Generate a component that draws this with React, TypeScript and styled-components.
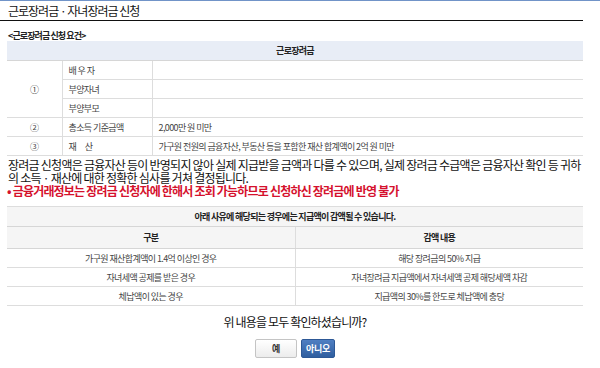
import React from 'react';
import styled, { createGlobalStyle } from 'styled-components';

const GlobalStyle = createGlobalStyle`
  body {
    margin: 0;
    background: #fff;
    font-family: "Noto Sans CJK KR", "Noto Sans", sans-serif;
    color: #222;
  }
`;

const Page = styled.div`
  width: 600px;
  height: 368px;
  overflow: hidden;
  border-top: 1px solid #7194c8;
  box-sizing: border-box;
`;

const TitleBar = styled.div`
  width: 583px;
  height: 20px;
  box-sizing: border-box;
  padding-left: 8px;
  border-bottom: 1px solid #111;
  display: flex;
  align-items: center;
  font-size: 12px;
  letter-spacing: -1px;
  color: #111;
`;

const Content = styled.div`
  width: 576px;
  padding-left: 7px;
  padding-top: 10px;
`;

const Caption = styled.div`
  font-size: 9px;
  font-weight: bold;
  letter-spacing: -0.9px;
  line-height: 10px;
  color: #222;
  padding-left: 1px;
`;

const Table = styled.table`
  width: 100%;
  border-collapse: collapse;
  table-layout: fixed;
  font-size: 9px;
  letter-spacing: -0.6px;
  color: #444;
`;

const HeadCell = styled.th<{ $bg?: string; $h?: number }>`
  height: ${p => p.$h ?? 19}px;
  padding: 0;
  background: ${p => p.$bg ?? '#e8edf6'};
  border-bottom: 1px solid #d6d6d6;
  font-weight: bold;
  letter-spacing: -0.7px;
  color: #222;
  text-align: center;
`;

const Cell = styled.td<{ $align?: string; $split?: boolean }>`
  height: 18px;
  padding: 0 6px;
  border-bottom: 1px solid #ddd;
  border-right: ${p => (p.$split ? '1px solid #ddd' : 'none')};
  text-align: ${p => p.$align ?? 'left'};
  white-space: nowrap;
`;

const Notice = styled.div`
  margin-top: 2px;
  padding-left: 1px;
  font-size: 12px;
  letter-spacing: -0.75px;
  line-height: 13px;
  white-space: nowrap;
  color: #111;
`;

const Warning = styled.div`
  font-size: 12px;
  letter-spacing: -0.8px;
  line-height: 14px;
  font-weight: bold;
  white-space: nowrap;
  color: #d5112d;
`;

const ReduceTable = styled(Table)`
  margin-top: 8px;
  border-top: 1px solid #ddd;
`;

const Question = styled.div`
  margin-top: 9px;
  text-align: center;
  font-size: 12px;
  letter-spacing: -0.85px;
  line-height: 14px;
  color: #111;
`;

const Buttons = styled.div`
  margin-top: 10px;
  display: flex;
  justify-content: center;
  gap: 4px;
`;

const Button = styled.button<{ $primary?: boolean; $w: number }>`
  width: ${p => p.$w}px;
  height: 19px;
  padding: 0;
  border-radius: 2px;
  font-family: inherit;
  font-size: 9px;
  font-weight: bold;
  letter-spacing: -0.3px;
  border: 1px solid ${p => (p.$primary ? '#2d5896' : '#c4c4c4')};
  color: ${p => (p.$primary ? '#fff' : '#333')};
  background: ${p =>
    p.$primary
      ? 'linear-gradient(#4f7fc2, #2f5e9f)'
      : 'linear-gradient(#ffffff, #ececec)'};
`;

const reductions = [
  ['가구원 재산합계액이 1.4억 이상인 경우', '해당 장려금의 50% 지급'],
  ['자녀세액 공제를 받은 경우', '자녀장려금 지급액에서 자녀세액 공제 해당세액 차감'],
  ['체납액이 있는 경우', '지급액의 30%를 한도로 체납액에 충당'],
];

export default function App() {
  return (
    <Page>
      <GlobalStyle />
      <TitleBar>근로장려금 · 자녀장려금 신청</TitleBar>
      <Content>
        <Caption>&lt;근로장려금 신청 요건&gt;</Caption>
        <Table>
          <colgroup>
            <col style={{ width: 55 }} />
            <col style={{ width: 90 }} />
            <col />
          </colgroup>
          <thead>
            <tr>
              <HeadCell colSpan={3}>근로장려금</HeadCell>
            </tr>
          </thead>
          <tbody>
            <tr>
              <Cell rowSpan={3} $align="center" $split>①</Cell>
              <Cell $split>배 우 자</Cell>
              <Cell />
            </tr>
            <tr>
              <Cell $split>부양자녀</Cell>
              <Cell />
            </tr>
            <tr>
              <Cell $split>부양부모</Cell>
              <Cell />
            </tr>
            <tr>
              <Cell $align="center" $split>②</Cell>
              <Cell $split>총소득 기준금액</Cell>
              <Cell>2,000만 원 미만</Cell>
            </tr>
            <tr>
              <Cell $align="center" $split>③</Cell>
              <Cell $split>재&nbsp;&nbsp;&nbsp;&nbsp;&nbsp;&nbsp;산</Cell>
              <Cell>가구원 전원의 금융자산, 부동산 등을 포함한 재산 합계액이 2억 원 미만</Cell>
            </tr>
          </tbody>
        </Table>

        <Notice>
          장려금 신청액은 금융자산 등이 반영되지 않아 실제 지급받을 금액과 다를 수 있으며, 실제 장려금 수급액은 금융자산 확인 등 귀하
          <br />
          의 소득 · 재산에 대한 정확한 심사를 거쳐 결정됩니다.
        </Notice>
        <Warning>• 금융거래정보는 장려금 신청자에 한해서 조회 가능하므로 신청하신 장려금에 반영 불가</Warning>

        <ReduceTable>
          <thead>
            <tr>
              <HeadCell colSpan={2} $bg="#f5f5f5">
                아래 사유에 해당되는 경우에는 지급액이 감액될 수 있습니다.
              </HeadCell>
            </tr>
            <tr>
              <HeadCell $bg="#f5f5f5" $h={21} style={{ borderRight: '1px solid #ddd', width: 288 }}>
                구분
              </HeadCell>
              <HeadCell $bg="#f5f5f5" $h={21}>감액 내용</HeadCell>
            </tr>
          </thead>
          <tbody>
            {reductions.map(([k, v]) => (
              <tr key={k}>
                <Cell $align="center" $split>{k}</Cell>
                <Cell $align="center">{v}</Cell>
              </tr>
            ))}
          </tbody>
        </ReduceTable>

        <Question>위 내용을 모두 확인하셨습니까?</Question>
        <Buttons>
          <Button $w={42}>예</Button>
          <Button $w={34} $primary>아니오</Button>
        </Buttons>
      </Content>
    </Page>
  );
}
